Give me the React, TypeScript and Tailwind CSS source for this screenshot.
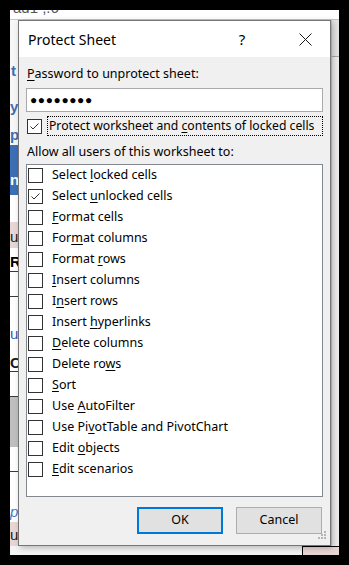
import React from "react";

const font = { fontFamily: '"Noto Sans", "Open Sans", sans-serif' };

function U({ children }: { children: React.ReactNode }) {
  return <span className="underline underline-offset-[2px] decoration-[1px]">{children}</span>;
}

function Box({ checked }: { checked?: boolean }) {
  return (
    <div className="w-[15px] h-[15px] border border-[#333333] bg-white shrink-0 flex items-center justify-center">
      {checked && (
        <svg width="13" height="13" viewBox="0 0 13 13">
          <polyline points="2.5,6.5 5,9 10.5,3.5" fill="none" stroke="#333333" strokeWidth="1" />
        </svg>
      )}
    </div>
  );
}

const items: { label: React.ReactNode; checked?: boolean }[] = [
  { label: <>Select{" "}<U>l</U>ocked cells</> },
  { label: <>Select{" "}<U>u</U>nlocked cells</>, checked: true },
  { label: <><U>F</U>ormat cells</> },
  { label: <>For<U>m</U>at columns</> },
  { label: <>Format{" "}<U>r</U>ows</> },
  { label: <><U>I</U>nsert columns</> },
  { label: <>I<U>n</U>sert rows</> },
  { label: <>Insert{" "}<U>h</U>yperlinks</> },
  { label: <><U>D</U>elete columns</> },
  { label: <>Delete ro<U>w</U>s</> },
  { label: <><U>S</U>ort</> },
  { label: <>Use{" "}<U>A</U>utoFilter</> },
  { label: <>Use Pi<U>v</U>otTable and PivotChart</> },
  { label: <>Edit{" "}<U>o</U>bjects</> },
  { label: <><U>E</U>dit scenarios</> },
];

function LeftStrip() {
  return (
    <div className="w-[8px] h-full flex flex-col bg-[#f7f7f7] overflow-hidden text-[15px] leading-none" style={{ fontFamily: '"Liberation Sans", sans-serif' }}>
      <div className="h-[43px] shrink-0" />
      <div className="h-[32px] shrink-0 text-[#3b6eb5] font-bold pl-[1px]">t</div>
      <div className="h-[31px] shrink-0 text-[#3b6eb5] font-bold pt-[4px]">y</div>
      <div className="h-[19px] shrink-0 text-[#3b6eb5] font-bold pt-[1px]">p</div>
      <div className="h-[50px] shrink-0 bg-[#3d6fb6] text-white font-bold flex items-end pb-[8px]">n</div>
      <div className="h-[27px] shrink-0 bg-white" />
      <div className="h-[26px] shrink-0 bg-[#e8d6d4] text-[#1a1a1a] flex items-end pb-[4px]">u</div>
      <div className="h-[24px] shrink-0 bg-white font-bold text-black pt-[6px] border-b border-[#3a3a3a]">R</div>
      <div className="h-[25px] shrink-0 bg-white border-b border-[#3a3a3a]" />
      <div className="h-[50px] shrink-0 bg-white text-[#1f5fbf] flex items-end pb-[6px]">u</div>
      <div className="h-[25px] shrink-0 bg-white text-[#1a1a1a] font-bold border-b border-[#3a3a3a] pt-[8px]">C</div>
      <div className="h-[25px] shrink-0 bg-white border-b border-[#3a3a3a]" />
      <div className="h-[50px] shrink-0 bg-[#bfbfbf]" />
      <div className="h-[25px] shrink-0 bg-white border-b border-[#3a3a3a]" />
      <div className="h-[50px] shrink-0 bg-white text-[#2f7fd8] italic flex items-end pb-[3px]">p</div>
      <div className="h-[24px] shrink-0 bg-[#e8d6d4] text-[#1a1a1a] flex items-center">u</div>
      <div className="flex-1 bg-white" />
    </div>
  );
}

export default function App() {
  return (
    <div className="w-[349px] h-[565px] bg-black pt-[10px] pl-[10px]">
      <div className="relative w-[329px] h-[545px] bg-white overflow-hidden">
        {/* background spreadsheet */}
        <div className="flex flex-col h-full">
          <div className="h-[10px] shrink-0 bg-white border-b border-[#c6c6c6] overflow-hidden">
            <div className="text-[15px] leading-none text-[#555] pl-[3px] -mt-[10px]" style={{ fontFamily: '"Liberation Sans", sans-serif' }}>
              ad1 ,.6
            </div>
          </div>
          <div className="flex flex-1">
            <LeftStrip />
            <div className="flex-1" />
            <div className="w-[8px] bg-[#e3e3e3] border-l border-[#c8c8c8] flex flex-col">
              <div className="h-[37px] border-b border-[#a8a8a8]" />
              <div className="flex-1 bg-[#ececec]" />
            </div>
          </div>
          <div className="h-[9px] shrink-0 flex">
            <div className="w-[292px] bg-[#f4f4f4]" />
            <div className="flex-1 bg-[#e8d6d4] border-l border-t border-black" />
          </div>
        </div>

        {/* dialog */}
        <div
          className="absolute left-[8px] top-[10px] w-[313px] h-[526px] border border-[#767676] bg-[#f0f0f0] flex flex-col text-[12.5px] text-black shadow-[2px_2px_6px_rgba(0,0,0,0.25)]"
          style={font}
        >
          <div className="h-[36px] shrink-0 bg-white flex items-center pl-[9px] pr-[18px]">
            <div className="text-[14px] flex-1">Protect Sheet</div>
            <div className="text-[15px] w-[14px] text-center mr-[50px]">?</div>
            <svg width="13" height="13" viewBox="0 0 13 13">
              <path d="M0.5 0.5 L12.5 12.5 M12.5 0.5 L0.5 12.5" stroke="#1a1a1a" strokeWidth="1" />
            </svg>
          </div>
          <div className="flex flex-col px-[7px] pt-[9px] flex-1">
            <div className="pl-[1px] leading-[16px]">
              <U>P</U>assword to unprotect sheet:
            </div>
            <div className="mt-[6px] h-[24px] bg-white border border-[#a9a9a9] flex items-center pl-[3px] text-[12px] tracking-[0.6px] leading-none">
              ●●●●●●●●
            </div>
            <div className="mt-[4px] flex items-center h-[20px]">
              <div className="ml-[1px]">
                <Box checked />
              </div>
              <div className="ml-[5px] flex-1 h-[20px] border border-dotted border-black flex items-center pl-[1px] whitespace-nowrap">
                <span className="text-[12.2px]">
                  Protect worksheet and <U>c</U>ontents of locked cells
                </span>
              </div>
            </div>
            <div className="mt-[8px] pl-[1px] leading-[16px]">Allow all users of this worksheet to:</div>
            <div className="mt-[4px] h-[333px] bg-white border border-[#828790] pl-[1px]">
              {items.map((it, i) => (
                <div key={i} className="h-[21px] flex items-center">
                  <Box checked={it.checked} />
                  <div className="ml-[9px] whitespace-nowrap">{it.label}</div>
                </div>
              ))}
            </div>
            <div className="mt-[10px] flex justify-end gap-[13px] pr-[1px]">
              <button className="w-[86px] h-[27px] bg-[#e1e1e1] border-2 border-[#0078d7] text-[12.5px]">OK</button>
              <button className="w-[86px] h-[27px] bg-[#e1e1e1] border border-[#adadad] text-[12.5px]">Cancel</button>
            </div>
          </div>
          <div className="absolute right-[3px] bottom-[5px]">
            <svg width="9" height="9" viewBox="0 0 9 9">
              <rect x="6" y="0" width="2" height="2" fill="#b5b5b5" />
              <rect x="3" y="3" width="2" height="2" fill="#b5b5b5" />
              <rect x="6" y="3" width="2" height="2" fill="#b5b5b5" />
              <rect x="0" y="6" width="2" height="2" fill="#b5b5b5" />
              <rect x="3" y="6" width="2" height="2" fill="#b5b5b5" />
              <rect x="6" y="6" width="2" height="2" fill="#b5b5b5" />
            </svg>
          </div>
        </div>
      </div>
    </div>
  );
}
